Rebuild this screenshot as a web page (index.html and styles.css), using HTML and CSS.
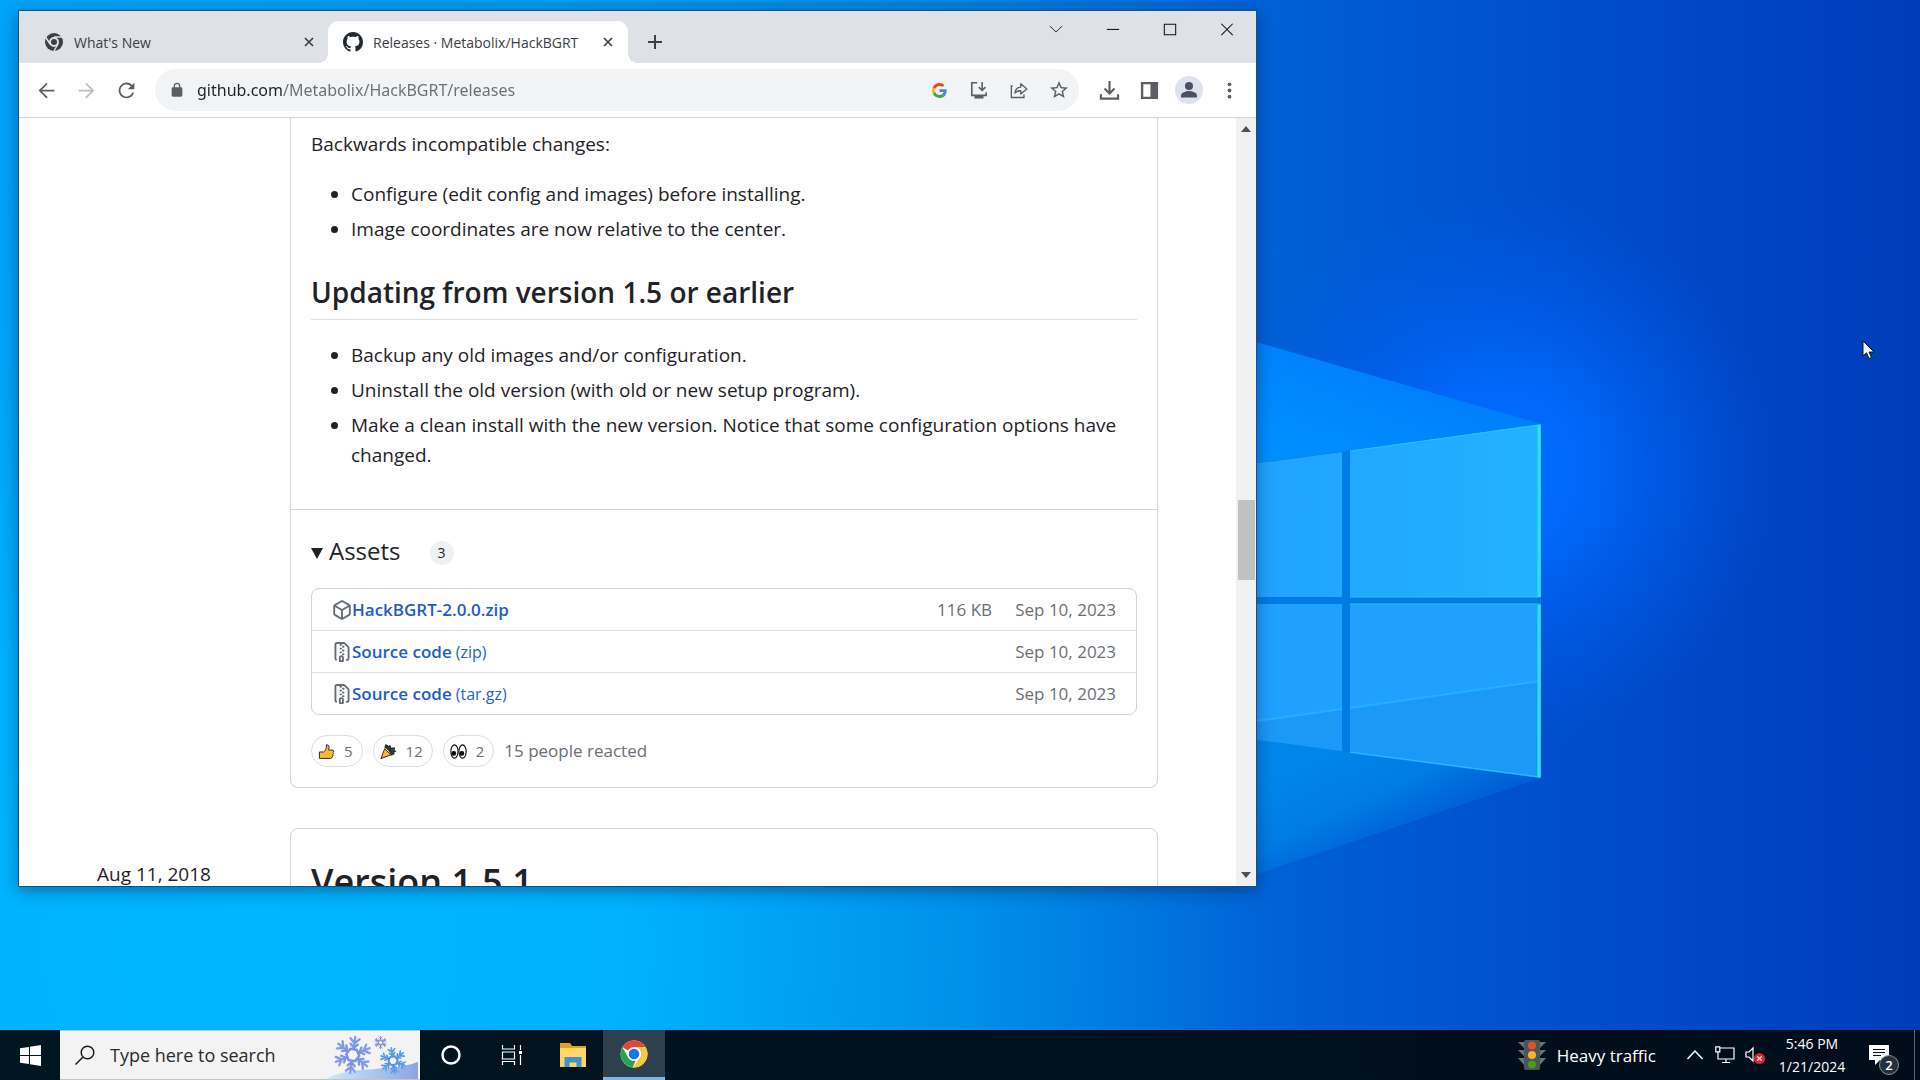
FILE: index.html
```html
<!DOCTYPE html>
<html lang="en">
<head>
<meta charset="utf-8">
<meta name="viewport" content="width=device-width, initial-scale=1">
<title>Releases · Metabolix/HackBGRT</title>
<link rel="stylesheet" href="styles.css">
</head>
<body>
<div class="screen">
  <main class="desktop">
    <svg class="wallpaper" viewBox="0 0 1920 1080" preserveAspectRatio="xMidYMid slice" aria-hidden="true">
      <defs>
        <linearGradient id="base" x1="0" y1="0" x2="1" y2="0">
          <stop offset="0" stop-color="#00a6fa"/><stop offset=".3" stop-color="#0098ea"/><stop offset=".5" stop-color="#0080dd"/>
          <stop offset=".65" stop-color="#0062d6"/><stop offset=".8" stop-color="#004fce"/><stop offset="1" stop-color="#003cba"/>
        </linearGradient>
        <radialGradient id="cyan" gradientUnits="userSpaceOnUse" cx="250" cy="950" r="1050">
          <stop offset="0" stop-color="#00b6ff"/><stop offset=".35" stop-color="#00b2ff"/><stop offset="1" stop-color="#0090f0" stop-opacity="0"/>
        </radialGradient>
        <radialGradient id="glow" gradientUnits="userSpaceOnUse" cx="1500" cy="470" r="280">
          <stop offset="0" stop-color="#0070ff"/><stop offset=".3" stop-color="#006aff" stop-opacity=".9"/><stop offset="1" stop-color="#0058e6" stop-opacity="0"/>
        </radialGradient>
        <linearGradient id="pane" x1="0" y1="0" x2="1" y2="0">
          <stop offset="0" stop-color="#20a0ff"/><stop offset="1" stop-color="#22b2ff"/>
        </linearGradient>
        <linearGradient id="beam" gradientUnits="userSpaceOnUse" x1="1380" y1="480" x2="1440" y2="330">
          <stop offset="0" stop-color="#008eff"/><stop offset="1" stop-color="#0078fa"/>
        </linearGradient>
        <linearGradient id="low" gradientUnits="userSpaceOnUse" x1="1350" y1="740" x2="1400" y2="850">
          <stop offset="0" stop-color="#0086ea"/><stop offset=".5" stop-color="#007ce4"/><stop offset="1" stop-color="#006cdc" stop-opacity=".3"/>
        </linearGradient>
      </defs>
      <rect width="1920" height="1080" fill="url(#base)"/>
      <rect width="1920" height="1080" fill="url(#cyan)"/>
      <rect width="1920" height="1080" fill="url(#glow)"/>
      <path d="M1100 297 1541 424V600H1100z" fill="url(#beam)"/>
      <path d="M1200 600H1541V778L1257 874 1200 880z" fill="url(#low)"/>
      <path d="M1200 471 1541 424V778L1200 732z" fill="#007ce4"/>
      <path d="M1200 471 1342 452V597H1200zM1350 451 1541 424V597H1350z" fill="url(#pane)"/>
      <path d="M1200 604H1342V751L1200 732zM1350 604H1541V778L1350 753z" fill="#20a0ff"/>
      <path d="M1200 729 1342 709V751L1200 732zM1350 708 1541 681V778L1350 753z" fill="#1c98f6"/>
      <path d="M1200 729 1342 709M1350 708 1540 681" stroke="#25b0ff" stroke-width="2" fill="none"/>
      <path d="M1350 451 1540 425V597H1350M1350 604H1540V777L1350 752" stroke="#2ac0ff" stroke-width="1" fill="none"/>
      <path d="M1539 425V597M1539 605V777" stroke="#2fe0ff" stroke-width="3"/>
    </svg>

    <section class="window" aria-label="Chrome">
      <header class="tabstrip">
        <div class="tab">
          <svg class="favicon" viewBox="0 0 20 20"><circle cx="10" cy="10" r="9" fill="#3c4043"/><circle cx="10" cy="10" r="4" fill="#3c4043" stroke="#dee1e6" stroke-width="2"/><path d="M10 5h9M6 12 1.500 5M14 12l-4 7" stroke="#dee1e6" stroke-width="1.500"/></svg>
          <span class="tab-title">What's New</span>
          <button class="tab-close" aria-label="Close tab"><svg viewBox="0 0 10 10"><path d="M1 1l8 8M9 1 1 9" stroke="currentColor" stroke-width="1.700"/></svg></button>
        </div>
        <div class="tab active">
          <svg class="favicon" viewBox="0 0 16 16" fill="#24292f"><path d="M8 0C3.580 0 0 3.580 0 8c0 3.540 2.290 6.530 5.470 7.590.4.070.55-.17.55-.38 0-.19-.01-.82-.01-1.490-2.010.37-2.530-.49-2.690-.94-.09-.23-.48-.94-.82-1.130-.28-.15-.68-.52-.01-.53.63-.01 1.080.58 1.230.82.72 1.210 1.870.87 2.330.66.07-.52.28-.87.51-1.070-1.780-.2-3.640-.89-3.640-3.950 0-.87.31-1.590.82-2.150-.08-.2-.36-1.020.08-2.120 0 0 .67-.21 2.200.82.64-.18 1.320-.27 2-.27s1.360.09 2 .27c1.530-1.040 2.200-.82 2.200-.82.44 1.100.16 1.920.08 2.120.51.56.82 1.270.82 2.150 0 3.070-1.870 3.750-3.650 3.950.29.25.54.73.54 1.480 0 1.070-.01 1.930-.01 2.200 0 .21.15.46.55.38A8.010 8.010 0 0016 8c0-4.420-3.580-8-8-8z"/></svg>
          <span class="tab-title">Releases · Metabolix/HackBGRT</span>
          <button class="tab-close" aria-label="Close tab"><svg viewBox="0 0 10 10"><path d="M1 1l8 8M9 1 1 9" stroke="currentColor" stroke-width="1.700"/></svg></button>
        </div>
        <button class="new-tab" aria-label="New tab"><svg viewBox="0 0 16 16"><path d="M8 1v14M1 8h14" stroke="currentColor" stroke-width="2"/></svg></button>
        <div class="window-controls">
          <button aria-label="Search tabs"><svg viewBox="0 0 16 16"><path d="M1 4.500l7 7 7-7" fill="none" stroke="currentColor"/></svg></button>
          <button aria-label="Minimize"><svg viewBox="0 0 16 16"><path d="M1 8.500h14" stroke="currentColor" stroke-width="1.200"/></svg></button>
          <button aria-label="Maximize"><svg viewBox="0 0 16 16"><path d="M1.500 2.500h13v12h-13z" fill="none" stroke="currentColor" stroke-width="1.200"/></svg></button>
          <button aria-label="Close"><svg viewBox="0 0 16 16"><path d="M1.500 2l13 13M14.500 2l-13 13" stroke="currentColor" stroke-width="1.200"/></svg></button>
        </div>
      </header>

      <nav class="toolbar" aria-label="Browser toolbar">
        <button class="tool" aria-label="Back"><svg viewBox="0 0 24 24"><path d="M21 11H6.800l6.500-6.500L12 3l-9 9 9 9 1.300-1.500L6.800 13H21z"/></svg></button>
        <button class="tool" aria-label="Forward" disabled><svg viewBox="0 0 24 24"><path d="M3 11h14.200l-6.500-6.500L12 3l9 9-9 9-1.300-1.500 6.500-6.500H3z"/></svg></button>
        <button class="tool" aria-label="Reload"><svg viewBox="0 0 24 24"><path d="M18.400 5.600A9 9 0 1 0 20.700 14.300h-2.100A7 7 0 1 1 12 5c1.900 0 3.600.8 4.900 2L13.500 10.500H21V3z"/></svg></button>
        <div class="omnibox">
          <svg class="lock" viewBox="0 0 24 24"><path d="M18 8h-1V6A5 5 0 0 0 7 6v2H6a2 2 0 0 0-2 2v10a2 2 0 0 0 2 2h12a2 2 0 0 0 2-2V10a2 2 0 0 0-2-2zM8.900 6a3.100 3.100 0 0 1 6.200 0v2H8.900z"/></svg>
          <input class="url" type="text" aria-label="Address" value="github.com/Metabolix/HackBGRT/releases">
          <button class="tool google" aria-label="Google"><svg viewBox="0 0 48 48"><path fill="#EA4335" d="M24 9.500c3.540 0 6.710 1.220 9.210 3.600l6.850-6.850C35.900 2.380 30.470 0 24 0 14.620 0 6.510 5.380 2.560 13.220l7.980 6.190C12.430 13.720 17.740 9.500 24 9.500z"/><path fill="#4285F4" d="M46.980 24.550c0-1.570-.15-3.090-.38-4.550H24v9.020h12.940c-.58 2.960-2.260 5.480-4.780 7.180l7.730 6c4.510-4.180 7.090-10.360 7.090-17.650z"/><path fill="#FBBC05" d="M10.530 28.590a14.500 14.500 0 0 1 0-9.180l-7.980-6.190a24 24 0 0 0 0 21.560z"/><path fill="#34A853" d="M24 48c6.480 0 11.930-2.130 15.890-5.810l-7.730-6c-2.150 1.450-4.920 2.300-8.160 2.300-6.260 0-11.570-4.220-13.470-9.910l-7.980 6.190C6.510 42.620 14.620 48 24 48z"/></svg></button>
          <button class="tool small" aria-label="Install app"><svg viewBox="0 0 20 20" fill="none" stroke="currentColor" stroke-width="1.800"><path d="M8 2H2v14h16v-3.500"/><path d="M13.500 1v9M9.800 6.800l3.700 3.700 3.700-3.700"/><path d="M5 18h10" stroke-width="3"/></svg></button>
          <button class="tool small" aria-label="Share"><svg viewBox="0 0 20 20" fill="none" stroke="currentColor" stroke-width="1.500"><path d="M3 5.500H1.500v12.800h14V15"/><path d="M5.500 13.500c.5-4.500 3-6.500 6.500-6.700V3l6.700 6L12 14.500v-3.700c-3 0-5 .8-6.500 2.700z" stroke-linejoin="round"/></svg></button>
          <button class="tool small" aria-label="Bookmark"><svg viewBox="2 2 20 20"><path d="M22 9.240l-7.190-.62L12 2 9.190 8.630 2 9.240l5.460 4.730L5.820 21 12 17.270 18.180 21l-1.630-7.030zM12 15.400l-3.760 2.270 1-4.280-3.320-2.880 4.380-.38L12 6.100l1.710 4.040 4.380.38-3.320 2.880 1 4.280z"/></svg></button>
        </div>
        <button class="tool" aria-label="Downloads"><svg viewBox="0 0 22 22" fill="none" stroke="currentColor" stroke-width="2.200"><path d="M11 1v13M5.800 9l5.200 5.200L16.200 9M2 15v4.500h18V15"/></svg></button>
        <button class="tool" aria-label="Side panel"><svg viewBox="0 0 22 22"><path d="M2 2h18v18H2zM4.500 4.500v13H12v-13z" fill-rule="evenodd"/></svg></button>
        <button class="tool" aria-label="Profile"><svg class="avatar" viewBox="0 0 28 28"><circle cx="14" cy="14" r="14" fill="#dfe2ec"/><circle cx="14" cy="10" r="4" fill="#4a4f63"/><path d="M6 21.500v-2c0-3 5-4.500 8-4.500s8 1.500 8 4.500v2z" fill="#4a4f63"/></svg></button>
        <button class="tool" aria-label="Menu"><svg viewBox="0 0 22 22"><circle cx="11" cy="4.500" r="2"/><circle cx="11" cy="11" r="2"/><circle cx="11" cy="17.500" r="2"/></svg></button>
      </nav>

      <div class="viewport">
        <div class="page">
          <article class="release">
            <div class="release-date"></div>
            <div class="card continued">
              <div class="notes">
                <p>Backwards incompatible changes:</p>
                <ul>
                  <li>Configure (edit config and images) before installing.</li>
                  <li>Image coordinates are now relative to the center.</li>
                </ul>
                <h2>Updating from version 1.5 or earlier</h2>
                <ul>
                  <li>Backup any old images and/or configuration.</li>
                  <li>Uninstall the old version (with old or new setup program).</li>
                  <li>Make a clean install with the new version. Notice that some configuration options have changed.</li>
                </ul>
              </div>
              <div class="card-footer">
                <details open>
                  <summary><svg class="triangle" viewBox="0 0 12 12"><path d="M0 1h12L6 12z"/></svg><span class="assets">Assets</span><span class="count">3</span></summary>
                  <table class="files">
                    <tbody>
                      <tr><td><a href="#"><svg class="octicon" viewBox="0 0 16 16"><path d="M8.878.392l5.250 3.045c.54.314.872.89.872 1.514v6.098a1.750 1.750 0 0 1-.872 1.514l-5.250 3.045a1.750 1.750 0 0 1-1.756 0l-5.250-3.045A1.750 1.750 0 0 1 1 11.049V4.951c0-.624.332-1.201.872-1.514L7.122.392a1.750 1.750 0 0 1 1.756 0ZM7.875 1.690l-4.630 2.685L8 7.133l4.755-2.758-4.630-2.685a.248.248 0 0 0-.25 0ZM2.500 5.677v5.372c0 .09.047.171.125.216l4.625 2.683V8.432Zm6.250 8.271 4.625-2.683a.25.25 0 0 0 .125-.216V5.677L8.750 8.432Z"/></svg><b>HackBGRT-2.0.0.zip</b></a></td><td class="size">116 KB</td><td class="date">Sep 10, 2023</td></tr>
                      <tr><td><a href="#"><svg class="octicon" viewBox="0 0 16 16"><use href="#zip"/></svg><b>Source code</b> <span>(zip)</span></a></td><td class="size"></td><td class="date">Sep 10, 2023</td></tr>
                      <tr><td><a href="#"><svg class="octicon" viewBox="0 0 16 16"><use href="#zip"/></svg><b>Source code</b> <span>(tar.gz)</span></a></td><td class="size"></td><td class="date">Sep 10, 2023</td></tr>
                    </tbody>
                  </table>
                </details>
                <div class="reactions">
                  <button class="reaction" aria-label="Thumbs up 5"><svg viewBox="0 0 18 18"><path d="M1.500 9.500h4.500c2-1.500 3-3.500 3-7.500 3-.5 3 2.500 2.300 5.500h4c1.600 0 1.600 2.200.6 2.500.8.600.6 2-.3 2.300.5.900.1 1.900-.8 2.200.2 1-.4 1.800-1.500 1.800H1.500z" fill="#ffb636" stroke="#2b2312"/></svg>5</button>
                  <button class="reaction" aria-label="Hooray 12"><svg viewBox="0 0 18 18"><path d="M5 6l6.500 6.500L1 16.500z" fill="#ffb636" stroke="#2b2312"/><path d="M4.500 4.500 6 1l3 2 2-1 1 3 4-.5-.5 3 2 1.500-2.500 1 .5 2-4 1.500C11 10 8 6.500 4.500 4.500z" fill="#20332f"/><path d="M9 6l2-2M12 8l3-1M12 11l2-1" stroke="#7a3a3a"/></svg>12</button>
                  <button class="reaction" aria-label="Eyes 2"><svg viewBox="0 0 18 18"><g fill="#fff" stroke="#111" stroke-width="1.200"><ellipse cx="4.700" cy="9" rx="3.800" ry="7"/><ellipse cx="13.300" cy="9" rx="3.800" ry="7"/></g><circle cx="4" cy="11" r="2.500"/><circle cx="12.600" cy="11" r="2.500"/></svg>2</button>
                  <span class="reacted">15 people reacted</span>
                </div>
              </div>
            </div>
          </article>
          <article class="release">
            <div class="release-date">Aug 11, 2018</div>
            <div class="card"><h1>Version 1.5.1</h1></div>
          </article>
        </div>
        <div class="scrollbar" aria-hidden="true">
          <svg viewBox="0 0 10 6"><path d="M0 6h10L5 0z"/></svg>
          <div class="track"><div class="thumb"></div></div>
          <svg viewBox="0 0 10 6"><path d="M0 0h10L5 6z"/></svg>
        </div>
      </div>
    </section>

    <svg class="cursor" viewBox="0 0 14 20" aria-hidden="true"><path d="M1 1v15l3.500-3.200L7 18.500l2.500-1L7 12h5z" fill="#fff" stroke="#111"/></svg>
  </main>

  <footer class="taskbar">
    <button class="start" aria-label="Start"><svg viewBox="0 0 20 20" fill="#fff"><path d="M0 3l8.500-1.200v7.700H0zM9.500 1.600 20 0v9.500H9.500zM0 10.500h8.500v7.700L0 17zM9.500 10.500H20V20L9.500 18.400z"/></svg></button>
    <div class="search">
      <svg class="magnifier" viewBox="0 0 20 20"><circle cx="12.500" cy="7.500" r="6.300" fill="none" stroke="#1b1b1b" stroke-width="1.500"/><path d="M8 12 .5 19.500" stroke="#1b1b1b" stroke-width="1.500"/></svg>
      <input type="search" aria-label="Search" placeholder="Type here to search">
      <svg class="snow" viewBox="0 0 100 50" aria-hidden="true">
        <defs>
          <linearGradient id="hill" x1="0" y1="0" x2="1" y2="0"><stop offset="0" stop-color="#c9ecfa"/><stop offset="1" stop-color="#8fa4e0"/></linearGradient>
          <linearGradient id="ice" gradientUnits="userSpaceOnUse" x1="-8" y1="-10" x2="8" y2="10"><stop offset="0" stop-color="#8fb0ee"/><stop offset="1" stop-color="#5a62d6"/></linearGradient>
          <linearGradient id="ice2" gradientUnits="userSpaceOnUse" x1="-8" y1="-10" x2="8" y2="10"><stop offset="0" stop-color="#55b0f2"/><stop offset="1" stop-color="#5563d0"/></linearGradient>
          <g id="arm"><path d="M0-3.500V-10M0-6.500l-2.500-2.500M0-6.500l2.500-2.500M0-4l-2-2M0-4l2-2M-1.800-3.100h3.600" fill="none" stroke-width="1.300" stroke-linecap="round"/></g>
          <g id="flake"><use href="#arm"/><use href="#arm" transform="rotate(60)"/><use href="#arm" transform="rotate(120)"/><use href="#arm" transform="rotate(180)"/><use href="#arm" transform="rotate(240)"/><use href="#arm" transform="rotate(300)"/></g>
        </defs>
        <path d="M4 50c14-8 30-9 46-10 20-2 36-2 50-8v18z" fill="url(#hill)"/>
        <use href="#flake" transform="translate(32 25) rotate(8) scale(1.900)" stroke="url(#ice)"/>
        <use href="#flake" transform="translate(61 12) scale(.65)" stroke="#8488cf"/>
        <use href="#flake" transform="translate(74 31) rotate(-8) scale(1.350)" stroke="url(#ice2)"/>
      </svg>
    </div>
    <div class="apps">
      <button aria-label="Cortana"><svg viewBox="0 0 22 22"><circle cx="11" cy="11" r="8.500" fill="none" stroke="#fff" stroke-width="2.500"/></svg></button>
      <button aria-label="Task view"><svg viewBox="0 0 22 22" fill="none" stroke="#fff" stroke-width="1.200"><path d="M1.500 1v4h12V1M1.500 8h12v7h-12zM1.500 21v-3.500h12V21M19.500 1v5M19.500 11v10"/><path d="M18 8.500h3" stroke-width="3"/></svg></button>
      <button aria-label="File Explorer"><svg class="big" viewBox="0 0 28 26"><path d="M1 1h10l2 3h14v6H1z" fill="#e3a21a"/><path d="M1 6h26v19H1z" fill="#ffd566"/><path d="M5.500 25V15h17v10h-5v-4.500h-7V25z" fill="#3f92cc"/></svg></button>
      <button class="running" aria-label="Chrome"><svg class="big" viewBox="0 0 48 48"><circle cx="24" cy="24" r="23" fill="#fff"/><path d="M24 1a23 23 0 0 1 19.900 11.500H24A11.500 11.500 0 0 0 14 18.200L4.100 12.500A23 23 0 0 1 24 1z" fill="#ea4335"/><path d="M4.100 12.500 14 29.700A11.500 11.500 0 0 0 27 35l-5.500 12A23 23 0 0 1 4.100 12.500z" fill="#2ba24c"/><path d="M43.900 12.500A23 23 0 0 1 22 47l11.500-16.500A11.500 11.500 0 0 0 30 13z" fill="#fcc934"/><circle cx="24" cy="24" r="11.500" fill="#fff"/><circle cx="24" cy="24" r="9" fill="#1a73e8"/></svg></button>
    </div>
    <div class="tray">
      <button class="weather"><svg viewBox="0 0 28 30"><path d="M0 2h28l-6 6v2h6l-6 6v2h6l-6 7H6l-6-7h6v-2l-6-6h6V8z" fill="#64727a"/><rect x="6" width="16" height="30" rx="2" fill="#4a555b"/><circle cx="14" cy="5.500" r="4" fill="#e8501e"/><circle cx="14" cy="15" r="4" fill="#fbb02d"/><circle cx="14" cy="24.500" r="4" fill="#4c9a1c"/></svg>Heavy traffic</button>
      <button class="icon" aria-label="Show hidden icons"><svg viewBox="0 0 18 18"><path d="M1.500 13 9 5l7.500 8" fill="none" stroke="#fff" stroke-width="1.500"/></svg></button>
      <button class="icon" aria-label="Network"><svg viewBox="0 0 20 18" fill="none" stroke="#fff" stroke-width="1.200"><path d="M5 2h14v11H3V6M7 16.500h8M11 13v3.500M.8.800h4v5h-4z"/></svg></button>
      <button class="icon" aria-label="Volume muted"><svg viewBox="0 0 20 18"><path d="M1 6h3l4-4v13l-4-4H1z" fill="none" stroke="#fff" stroke-width="1.200"/><circle cx="14.500" cy="12.500" r="5.500" fill="#d5283a"/><path d="M12.300 10.300l4.400 4.400m0-4.400-4.400 4.400" stroke="#fff" stroke-width="1.200"/></svg></button>
      <button class="clock"><span>5:46 PM</span><span>1/21/2024</span></button>
      <button class="notifications" aria-label="Notifications"><svg viewBox="0 0 20 20"><path d="M0 0h20v15h-9l-5 5v-5H0z" fill="#fff"/><path d="M4 4.500h12M4 7.500h12M4 10.500h8" stroke="#05101c" stroke-width="1.200"/></svg><span class="badge">2</span></button>
    </div>
  </footer>
</div>
<svg class="sprite" aria-hidden="true"><symbol id="zip" viewBox="0 0 16 16"><path d="M3.500 1.750v11.500c0 .09.048.173.126.217a.75.75 0 0 1-.752 1.298A1.748 1.748 0 0 1 2 13.250V1.750C2 .784 2.784 0 3.750 0h5.586c.464 0 .909.185 1.237.513l2.914 2.914c.329.328.513.773.513 1.237v8.586A1.750 1.750 0 0 1 12.250 15h-.5a.75.75 0 0 1 0-1.500h.5a.25.25 0 0 0 .25-.25V4.664a.25.25 0 0 0-.073-.177L9.513 1.573a.25.25 0 0 0-.177-.073H7.250a.75.75 0 0 1 0 1.500h-.5a.75.75 0 0 1 0-1.500h-3a.25.25 0 0 0-.25.25Zm3.750 8.750h.5c.966 0 1.750.784 1.750 1.750v3a.75.75 0 0 1-.75.75h-2.500a.75.75 0 0 1-.75-.75v-3c0-.966.784-1.750 1.750-1.750ZM6 5.250a.75.75 0 0 1 .75-.75h.5a.75.75 0 0 1 0 1.500h-.5A.75.75 0 0 1 6 5.250Zm.75 2.250h.5a.75.75 0 0 1 0 1.500h-.5a.75.75 0 0 1 0-1.500ZM8 6.750A.75.75 0 0 1 8.750 6h.5a.75.75 0 0 1 0 1.500h-.5A.75.75 0 0 1 8 6.750ZM8.750 3h.5a.75.75 0 0 1 0 1.500h-.5a.75.75 0 0 1 0-1.500ZM8 9.750A.75.75 0 0 1 8.750 9h.5a.75.75 0 0 1 0 1.500h-.5A.75.75 0 0 1 8 9.750Zm-1 2.500v2.250h1v-2.250a.25.25 0 0 0-.25-.25h-.5a.25.25 0 0 0-.25.25Z"/></symbol></svg>
</body>
</html>
```
FILE: styles.css
```css
* { box-sizing: border-box; }
body { margin: 0; font-family: "Open Sans", "Noto Sans", sans-serif; color: #1f2328; }
button { margin: 0; padding: 0; border: 0; background: none; color: inherit; font: inherit; }
input { min-width: 0; margin: 0; padding: 0; border: 0; outline: 0; background: none; }
svg { display: block; flex: none; }
.sprite { position: absolute; width: 0; height: 0; }

.screen { display: flex; flex-direction: column; height: 100vh; overflow: hidden; }
.desktop { position: relative; flex: 1; min-height: 0; background: #006ad8; }
.wallpaper { position: absolute; top: 0; left: 0; width: 100%; height: 100vh; }
.cursor { position: absolute; left: 97%; top: 33%; width: 14px; height: 20px; }

/* Browser window */
.window {
  position: absolute; left: 19px; top: 11px; width: 64.43%; height: 84.96%;
  display: flex; flex-direction: column; background: #fff;
  box-shadow: 0 0 0 1px #1b4f7c, 0 4px 16px rgba(0, 20, 60, .45);
}
.tabstrip { display: flex; align-items: flex-end; height: 52px; background: #dee1e6; color: #3c4043; }
.tab { display: flex; align-items: center; width: 309px; height: 42px; padding: 0 11px 0 25px; font-size: 14px; }
.tab-title { flex: 1; margin-left: 10px; white-space: nowrap; }
.tab.active { position: relative; width: 300px; padding: 0 12px 0 15px; border-radius: 10px 10px 0 0; background: #fff; }
.tab.active::before, .tab.active::after { content: ""; position: absolute; bottom: 0; width: 10px; height: 10px; }
.tab.active::before { left: -10px; background: radial-gradient(circle at 0 0, transparent 10px, #fff 10px); }
.tab.active::after { right: -10px; background: radial-gradient(circle at 100% 0, transparent 10px, #fff 10px); }
.favicon { width: 20px; height: 20px; }
.tab-close { display: grid; place-items: center; width: 16px; height: 20px; }
.tab-close svg { width: 10px; height: 10px; }
.new-tab { display: grid; place-items: center; width: 54px; height: 42px; }
.new-tab svg { width: 16px; height: 16px; }
.window-controls { display: flex; align-self: flex-start; margin-left: auto; margin-right: 1px; color: #111; }
.window-controls button { display: grid; place-items: center; width: 57px; height: 36px; }
.window-controls svg { width: 14px; height: 14px; }

.toolbar { display: flex; align-items: center; height: 55px; padding: 0 7px; border-bottom: 1px solid #d3d5d8; }
.tool { display: grid; place-items: center; width: 40px; height: 40px; color: #5b5f63; fill: currentColor; }
.tool:disabled { color: #bbbdc0; }
.tool svg { width: 21px; height: 21px; }
.tool.small svg { width: 18px; height: 18px; }
.tool.google svg { width: 15px; height: 15px; }
.tool .avatar { width: 28px; height: 28px; }
.omnibox { display: flex; flex: 1; align-items: center; height: 42px; margin: 0 10px 0 9px; padding-left: 14px; border-radius: 21px; background: #f1f3f4; }
.lock { width: 16px; height: 16px; fill: #5b5f63; }
.url {
  flex: 1; height: 40px; margin-left: 12px; font: 16px "Noto Sans", sans-serif;
  background: linear-gradient(90deg, #202124 86px, #6a6e72 86px) text; color: transparent;
}

/* Release page */
.viewport { display: flex; flex: 1; min-height: 0; }
.page { flex: 1; padding: 0 78px; overflow: hidden; font-size: 19px; line-height: 30px; }
.release { display: grid; grid-template-columns: 193px 1fr; margin-bottom: 40px; }
.release-date { padding-top: 31px; }
.card { border: 1px solid #d0d3d7; border-radius: 8px; }
.card.continued { border-top: 0; border-radius: 0 0 8px 8px; }
.notes { padding: 11px 20px 39px; }
.notes p { margin: 0; }
.notes ul { margin: 20px 0 0; padding-left: 40px; }
.notes li + li { margin-top: 5px; }
.notes h2 { margin: 30px 0 0; padding-bottom: 9px; border-bottom: 1px solid #dcdfe2; font-size: 28px; font-weight: 600; line-height: 36px; }
.card-footer { padding: 26px 20px 20px; border-top: 1px solid #d0d3d7; }
.card h1 { margin: 0; padding: 30px 20px; font-size: 36px; font-weight: 600; line-height: 45px; }
summary { display: flex; align-items: center; list-style: none; }
.triangle { width: 12px; height: 12px; margin-top: 4px; fill: #1f2328; }
.assets { margin-left: 6px; font-size: 24px; font-weight: 500; }
.count { width: 24px; height: 24px; margin: 4px 0 0 29px; border-radius: 12px; background: #eff0f2; font-size: 14px; line-height: 24px; text-align: center; }
.files { width: 100%; margin-top: 22px; border: 1px solid #d0d3d7; border-radius: 8px; border-spacing: 0; font-size: 17px; line-height: 24px; }
.files td { height: 41px; padding: 0; }
.files tr + tr td { height: 42px; border-top: 1px solid #dcdee1; }
.files td:first-child { padding-left: 20px; }
.files a { display: flex; align-items: center; color: #2a62c4; text-decoration: none; }
.files b { font-weight: 600; color: #1f5bc9; }
.files a span { margin-left: 4px; font-size: 16px; }
.octicon { width: 20px; height: 20px; fill: #656d76; }
.files .size, .files .date { color: #6a7077; text-align: right; white-space: nowrap; }
.files .date { width: 144px; padding-right: 20px; }
.reactions { display: flex; align-items: center; gap: 10px; margin-top: 20px; color: #6a7077; font-size: 17px; }
.reaction { display: flex; align-items: center; gap: 9px; height: 32px; padding: 0 9px 0 6px; border: 1px solid #dcdfe2; border-radius: 16px; font-size: 15px; }
.reaction svg { width: 17px; height: 17px; }

.scrollbar { display: flex; flex-direction: column; align-items: center; width: 20px; padding: 8px 0; background: #f0f0f0; }
.scrollbar svg { width: 10px; height: 6px; fill: #505050; }
.track { flex: 1; width: 17px; }
.track::before { content: ""; display: block; height: calc(50% - 2px); }
.thumb { height: 80px; background: #c1c1c1; }

/* Taskbar */
.taskbar { position: relative; display: flex; height: 50px; background: linear-gradient(90deg, #001620, #000c1a); color: #fff; }
.start { display: grid; place-items: center; width: 60px; }
.start svg { width: 21px; height: 21px; }
.search { display: flex; align-items: center; width: 360px; padding-left: 15px; border: solid #c4c4c4; border-width: 1px 0; background: #f3f3f3; }
.magnifier { width: 20px; height: 20px; }
.search input { flex: 1; margin-left: 15px; font: 18px "Open Sans", sans-serif; }
.search input::placeholder { color: #2b2b2b; opacity: 1; }
.snow { width: 100px; height: 48px; }
.apps { display: flex; }
.apps button { display: grid; place-items: center; width: 61px; }
.apps svg { width: 22px; height: 22px; }
.apps .big { width: 28px; height: 28px; }
.apps .running { width: 62px; background: #2c404e; border-bottom: 3px solid #76b9ed; }
.tray { display: flex; align-items: center; margin-left: auto; margin-right: 5px; padding-right: 8px; border-right: 1px solid #5b6470; }
.weather { display: flex; align-items: center; gap: 11px; margin-right: 24px; font-size: 17px; }
.weather svg { width: 28px; height: 30px; }
.icon { display: grid; place-items: center; width: 30px; height: 50px; }
.icon svg { width: 20px; height: 18px; }
.clock { display: grid; width: 84px; font-size: 14px; line-height: 23px; text-align: center; }
.notifications { position: relative; width: 52px; padding-left: 15px; }
.notifications svg { width: 20px; height: 20px; }
.badge { position: absolute; left: 25px; top: 10px; width: 20px; height: 20px; border: 1px solid #8a9099; border-radius: 10px; background: #24303b; font-size: 13px; font-weight: 600; line-height: 18px; text-align: center; }
```
